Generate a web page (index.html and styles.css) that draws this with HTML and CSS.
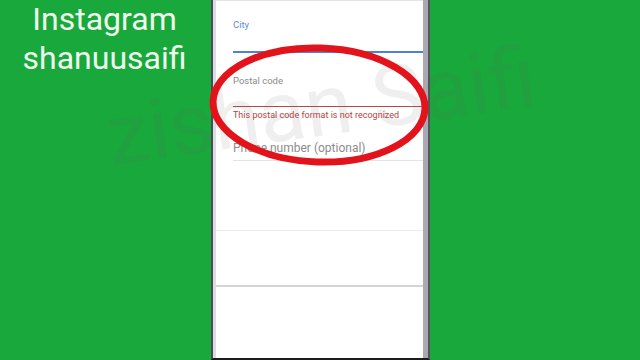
FILE: index.html
```html
<!DOCTYPE html>
<html>
<head>
  <title>Postal code error</title>
  <link rel="stylesheet" href="styles.css">
</head>
<body>
  <div class="caption">
    <p>Instagram</p>
    <p>shanuusaifi</p>
  </div>

  <div class="phone">
    <div class="frame">
      <div class="screen">
        <div class="field city">
          <label>City</label>
          <div class="line"></div>
        </div>

        <div class="field postal">
          <label>Postal code</label>
          <div class="line"></div>
          <div class="error">This postal code format is not recognized</div>
        </div>

        <div class="field phone-no">
          <div class="placeholder">Phone number (optional)</div>
          <div class="line"></div>
        </div>

        <div class="divider"></div>
        <div class="divider thick"></div>
      </div>
    </div>
  </div>

  <!-- watermark + marker circle drawn over the shot -->
  <div class="watermark">zishan Saifi</div>
  <svg class="marker" width="640" height="360" viewBox="0 0 640 360">
    <ellipse cx="319" cy="105" rx="106" ry="57" fill="none" stroke="#e3131b" stroke-width="7" transform="rotate(2 319 105)"/>
  </svg>
</body>
</html>
```

FILE: styles.css
```css
body {
  margin: 0;
  width: 640px;
  height: 360px;
  overflow: hidden;
  position: relative;
  display: flex;
  background: #19a83b;
  font-family: Roboto, "Liberation Sans", sans-serif;
}
.caption {
  width: 211px;
  color: #eefaee;
  font-size: 32px;
  text-align: center;
}
.caption p {
  margin: 0;
  line-height: 39px;
  padding-right: 2px;
}
.phone {
  width: 215px;
  height: 358px;
  border-left: 2px solid #4b4d52;
  border-right: 2px solid #55575c;
  border-bottom: 2px solid #1c1c1c;
}
.frame {
  height: 100%;
  display: flex;
  border-left: 3px solid #dadde7;
  border-right: 5px solid #a9a9b3;
}
.screen {
  flex: 1;
  background: #fff;
  border-top: 1px solid #e4e4e4;
}
.field {
  padding-left: 17px;
}
.field label {
  display: block;
  font-size: 9.5px;
  line-height: 12px;
}
.city {
  padding-top: 18px;
}
.city label {
  color: #5a8ed8;
}
.city .line {
  margin-top: 20px;
  height: 2px;
  background: #4e82d6;
}
.postal {
  margin-top: 22px;
}
.postal label {
  color: #8a8a8a;
}
.postal .line {
  margin-top: 19px;
  height: 1px;
  background: #b54a44;
}
.error {
  margin-top: 2px;
  font-size: 9px;
  line-height: 12px;
  color: #b8433d;
}
.phone-no {
  margin-top: 20px;
}
.placeholder {
  font-size: 12px;
  line-height: 14px;
  color: #8c8c8c;
}
.phone-no .line {
  margin-top: 5px;
  height: 1px;
  background: #e4e4e4;
}
.divider {
  margin-top: 69px;
  height: 1px;
  background: #ececec;
}
.divider.thick {
  margin-top: 54px;
  height: 2px;
  background: #d4d4d6;
}
.watermark {
  position: absolute;
  left: 114px;
  top: 86px;
  font-size: 85px;
  color: rgba(100, 100, 100, 0.1);
  transform: rotate(-8deg);
  transform-origin: left bottom;
  white-space: nowrap;
  pointer-events: none;
}
.marker {
  position: absolute;
  left: 0;
  top: 0;
}
```
